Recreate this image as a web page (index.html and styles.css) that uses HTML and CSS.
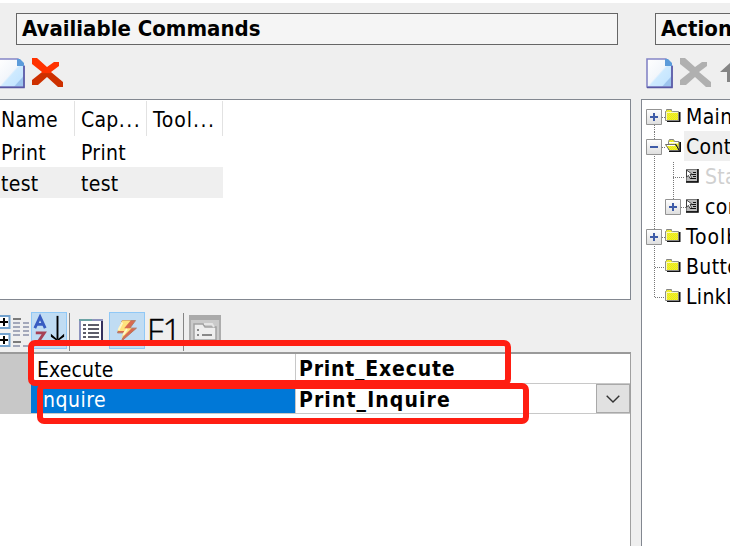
FILE: index.html
```html
<!DOCTYPE html>
<html lang="en">
<head>
<meta charset="utf-8">
<title>Commands</title>
<link rel="stylesheet" href="styles.css">
</head>
<body>
<svg class="defs" aria-hidden="true">
  <defs>
    <linearGradient id="page" x1="0" y1="0" x2="1" y2="1"><stop offset="0" stop-color="#fff"/><stop offset=".49" stop-color="#f2f6fb"/><stop offset=".54" stop-color="#ceeaff"/><stop offset=".78" stop-color="#c6e6ff"/><stop offset=".81" stop-color="#9dc4ee"/></linearGradient>
    <linearGradient id="box" x1="0" y1="0" x2="0" y2="1"><stop offset="0" stop-color="#fff"/><stop offset="1" stop-color="#dedede"/></linearGradient>
    <linearGradient id="redfill" x1="0" y1="0" x2="0" y2="1"><stop offset=".5" stop-color="#ff3200"/><stop offset=".54" stop-color="#cd3000"/></linearGradient>
    <pattern id="dither" width="2" height="2" patternUnits="userSpaceOnUse"><path fill="#ffff12" d="M0 0h2v2H0z"/><path fill="#d9d936" d="M0 0h1v1H0zM1 1h1v1H1z"/></pattern>
    <symbol id="new" viewBox="0 0 27 31"><path fill="url(#page)" stroke="#8585c6" stroke-width="1.600" d="M1 1h19l6 7v21H1z"/><path fill="none" stroke="#5757a4" stroke-width="1.500" d="M1 29.500h25V8"/><path fill="#5b9bda" d="M19 1v7h7V5l-4-4z"/></symbol>
    <symbol id="cross" viewBox="0 0 31 29"><path d="M0 0h5l10 9 7-5h5v4l-8 6 12 10v5h-5l-11-10-9 8H0v-5l10-8L0 6z"/></symbol>
    <symbol id="expand" viewBox="0 0 16 16"><path fill="url(#box)" stroke="#939393" d="M.5.500h15v15H.5z"/><path stroke="#3f5ca8" stroke-width="2" d="M4 8h8M8 4v8"/></symbol>
    <symbol id="collapse" viewBox="0 0 16 16"><path fill="url(#box)" stroke="#939393" d="M.5.500h15v15H.5z"/><path stroke="#3f5ca8" stroke-width="2" d="M4 8h8"/></symbol>
    <symbol id="folder" viewBox="0 0 16 13"><path fill="#111" d="M13.500 3h2v10H2v-1.500h11.500z"/><path fill="url(#dither)" stroke="#858585" d="M.5 11.500v-9l1-1V.5h5v1l1 1h6v9z"/><path fill="none" stroke="#fff" stroke-width=".8" d="M1.400 11V3.400h11.500"/></symbol>
    <symbol id="folder-open" viewBox="0 0 16 13"><path fill="#111" d="M14 3h2v10H4v-1.500h10z"/><path fill="url(#dither)" stroke="#858585" d="M3.500 11V2.500l1-2h4l1 2h4.500v9"/><path fill="#fff" d="M4 3h9v1.500H4z"/><path fill="url(#dither)" stroke="#707070" d="M.5 5.500h10l4 6h-10z"/><path stroke="#fff" d="M2 6.500h8"/><path stroke="#111" d="M10.500 5l4 7"/></symbol>
    <symbol id="action" viewBox="0 0 13 14"><path fill="#bcbcbc" stroke="#777" d="M.5.500h11v12H.5z"/><path fill="none" stroke="#000" stroke-width="1.500" d="M12 0v13H0"/><path stroke="#111" d="M7 3.500h3M6 5.500h4M7 7.500h3M4 9.500h6"/><path fill="#fff" stroke="#222" stroke-width=".8" d="M.5 1v7l2-1.500 1.500 3 1.500-1-1.500-3h2.500z"/></symbol>
  </defs>
</svg>

<div class="window">
  <section class="commands">
    <h2 class="title title-left">Availiable Commands</h2>
    <div class="tools tools-left">
      <svg class="new"><use href="#new"/></svg>
      <svg class="cross red" viewBox="0 0 31 29"><use href="#cross"/></svg>
    </div>
    <div class="list">
      <div class="row head"><span>Name</span><span>Cap<i class="more">...</i></span><span>Tool<i class="more">...</i></span></div>
      <div class="row"><span>Print</span><span>Print</span><span></span></div>
      <div class="row current"><span>test</span><span>test</span><span></span></div>
    </div>
    <div class="propbar">
      <svg class="categories" viewBox="0 0 31 38"><g fill="#fff" stroke="#73a2ce" stroke-width="2"><path d="M-4 4H9.500v12H-4zM-4 22H9.500v12H-4z"/></g><path stroke="#000" stroke-width="2" d="M0 10h8M4 6v8M0 28h8M4 24v8"/><path stroke="#555" stroke-width="1.500" d="M13 7h8M13 30h8"/><path stroke="#8b91a9" stroke-width="1.500" stroke-dasharray="7 3" d="M13 11h16M13 15h16M13 19h16M13 23h16M13 34h16"/></svg>
      <span class="toggle"><svg viewBox="0 0 36 37"><path fill="none" stroke="#385cc2" stroke-width="3" d="M3 16L8.500 4 14 16M5 12h8"/><path fill="none" stroke="#a64156" stroke-width="3" d="M4 21h9L5 33h10"/><path stroke="#000" stroke-width="2" d="M27 3v25"/><path d="M20 22l7 6 7-6v3l-7 5-7-5z"/></svg></span>
      <i class="sep first"></i>
      <svg class="props" viewBox="0 0 24 25"><path fill="#fff" stroke="#8d93bd" stroke-width="2" d="M1 1h22v23H1z"/><path fill="none" stroke="#34305d" stroke-width="2" d="M23 2v22"/><path stroke="#6ca3a5" stroke-width="2" d="M0 1h13"/><path stroke="#29283a" stroke-width="1.600" d="M4 6h3M9 6h11M4 10h3M9 10h11M4 14h3M9 14h11M4 18h3M9 18h11"/></svg>
      <span class="toggle bolt"><svg viewBox="0 0 36 37"><path fill="#d96a50" stroke="#b4765c" d="M13 8h14l-6 8h7L12 30l4-9H8z"/><path fill="#ffe27d" d="M13 8h9l-7 8h8L12 27l3-8H8z"/><path stroke="#fff6cb" stroke-width="2" d="M13 10l-4 8M18 17l-4 6"/></svg></span>
      <span class="fkey">F1</span>
      <i class="sep second"></i>
      <svg class="pages" viewBox="0 0 32 31"><path fill="#cacaca" stroke="#adadad" stroke-width="2" d="M1 1h30v31H1z"/><path fill="#aaa" d="M0 0h32v5H0z"/><path fill="#eee" stroke="#a2a2a2" stroke-width="1.500" d="M5 12V9h9l2 3h11v13H5z"/><path fill="none" stroke="#e5e5e5" stroke-width="2" d="M15 9h8l2 3"/><path stroke="#888" stroke-width="2" d="M8 15h2M8 20h2M13 20h10"/></svg>
    </div>
    <div class="grid">
      <div class="prop"><i class="gutter"></i><span class="name">Execute</span><b class="value">Print_Execute</b></div>
      <div class="prop selected"><i class="gutter"></i><span class="name">Inquire</span><b class="value">Print_Inquire</b><button class="drop" aria-label="Choose"><svg viewBox="0 0 14 8"><path d="M.7.700L7 7 13.300.700"/></svg></button></div>
    </div>
  </section>

  <section class="actions">
    <h2 class="title title-right">Actions</h2>
    <div class="tools tools-right">
      <svg class="new"><use href="#new"/></svg>
      <svg class="cross gray"><use href="#cross"/></svg>
      <svg class="up" viewBox="0 0 22 20"><path d="M11 0l11 10h-7v10H7V10H0z"/></svg>
    </div>
    <div class="tree">
      <div class="node"><svg class="lead" viewBox="0 0 42 30"><path class="dots" d="M12.500 15v15M20 15.500h4"/><use href="#expand" x="4" y="7" width="16" height="16"/><use href="#folder" x="23" y="7" width="16" height="13"/></svg><span>MainMenu</span></div>
      <div class="node"><svg class="lead" viewBox="0 0 42 30"><path class="dots" d="M12.500 0v30M20 15.500h4"/><use href="#collapse" x="4" y="7" width="16" height="16"/><use href="#folder-open" x="23" y="7" width="16" height="13"/></svg><span class="active">ContextMenu</span></div>
      <div class="node child"><svg class="lead" viewBox="0 0 61 30"><path class="dots" d="M12.500 0v30M31.500 0v30M31 15.500h12"/><use href="#action" x="44" y="7" width="13" height="14"/></svg><span class="disabled">Standard</span></div>
      <div class="node child"><svg class="lead" viewBox="0 0 61 30"><path class="dots" d="M12.500 0v30M31.500 0v15M39 15.500h5"/><use href="#expand" x="23" y="7" width="16" height="16"/><use href="#action" x="44" y="7" width="13" height="14"/></svg><span>commands</span></div>
      <div class="node"><svg class="lead" viewBox="0 0 42 30"><path class="dots" d="M12.500 0v30M20 15.500h4"/><use href="#expand" x="4" y="7" width="16" height="16"/><use href="#folder" x="23" y="7" width="16" height="13"/></svg><span class="wide">Toolbar</span></div>
      <div class="node"><svg class="lead" viewBox="0 0 42 30"><path class="dots" d="M12.500 0v30M13 15.500h10"/><use href="#folder" x="23" y="7" width="16" height="13"/></svg><span>Buttons</span></div>
      <div class="node"><svg class="lead" viewBox="0 0 42 30"><path class="dots" d="M12.500 0v15M13 15.500h10"/><use href="#folder" x="23" y="7" width="16" height="13"/></svg><span>LinkLabels</span></div>
    </div>
  </section>
  <div class="mark mark-execute"></div>
  <div class="mark mark-inquire"></div>
</div>
</body>
</html>
```
FILE: styles.css
```css
* { box-sizing: border-box; }
body { margin: 0; font: 21px/30px "DejaVu Sans Condensed", "DejaVu Sans", sans-serif; font-stretch: condensed; color: #000; }
svg { display: block; flex: none; }
.defs { position: absolute; width: 0; height: 0; }
.window { position: relative; display: flex; width: 730px; height: 546px; overflow: hidden; background: #efefef; border-top: 3px solid #fff; }
.commands { width: 641px; flex: none; display: flex; flex-direction: column; }
.actions { flex: 1; min-width: 0; display: flex; flex-direction: column; }
.title { margin: 10px 0 0; height: 32px; flex: none; padding-left: 5px; border: 1px solid #666; background: #f5f5f5; font-size: 22px; line-height: 29px; white-space: nowrap; overflow: hidden; }
.title-left { margin-left: 16px; width: 602px; }
.title-right { margin-left: 14px; width: 140px; }
.tools { height: 54px; flex: none; display: flex; align-items: flex-start; padding-top: 13px; }
.tools-left { margin-left: -2px; gap: 7px; }
.tools-right { padding-left: 5px; gap: 7px; overflow: hidden; }
.new { width: 27px; height: 31px; }
.cross { width: 31px; height: 29px; }
.red { fill: url(#redfill); }
.gray { fill: #b0b0b0; }
.up { width: 22px; height: 20px; margin: 4px 0 0 2px; fill: #858585; }

.list { width: 631px; height: 201px; flex: none; border: solid #828790; border-width: 1px 1px 1px 0; background: #fff; padding-top: 1px; }
.row { width: 223px; height: 31px; display: grid; grid-template-columns: 75px 72px 76px; line-height: 34px; }
.row span { padding-left: 6px; white-space: nowrap; letter-spacing: .3px; }
.row span:first-child { padding-left: 1px; }
.head { height: 35px; line-height: 38px; }
.head span { height: 35px; border-right: 1px solid #e2e2e2; }
.head span:last-child { letter-spacing: .9px; }
.head .more { font-style: normal; letter-spacing: 1.5px; }
.current { background: #efefef; }

.propbar { height: 52px; flex: none; padding-top: 12px; display: flex; align-items: flex-start; }
.categories { width: 31px; height: 38px; }
.toggle { width: 36px; height: 37px; background: #c0dcf3; border: 1px solid #90c8f6; }
.toggle svg { width: 34px; height: 35px; }
.sep { width: 1px; height: 38px; background: #858585; }
.first { margin: 1px 9px 0 2px; }
.second { margin: 1px 5px 0 0; }
.props { width: 24px; height: 25px; margin-top: 7px; }
.bolt { margin-left: 6px; }
.fkey { width: 38px; padding-left: 2px; font: 300 33px/37px "Open Sans", sans-serif; letter-spacing: -1px; -webkit-text-stroke: .4px #000; }
.pages { width: 32px; height: 31px; margin-top: 3px; }

.grid { width: 631px; flex: 1; background: #fff; border-top: 2px solid #9a9a9a; border-right: 1px solid #a0a0a0; }
.prop { height: 30px; display: flex; border-bottom: 1px solid #c8c8c8; }
.gutter { width: 31px; background: #c8c8c8; margin-bottom: -1px; }
.name { width: 265px; padding-left: 6px; border-right: 1px solid #c8c8c8; line-height: 33px; height: 29px; letter-spacing: .15px; }
.value { flex: 1; padding-left: 3px; line-height: 31px; height: 29px; letter-spacing: .8px; }
.selected .name { background: #0078d7; color: #fff; line-height: 32px; letter-spacing: .5px; }
.selected .value { letter-spacing: 1.1px; line-height: 32px; }
.drop { width: 34px; height: 29px; padding: 0; border: 1px solid #a9a9a9; background: #e1e1e1; display: grid; place-items: center; }
.drop svg { width: 14px; height: 8px; fill: none; stroke: #333; stroke-width: 1.4; }

.tree { flex: 1; background: #fff; border: solid #828790; border-width: 1px 0 0 1px; padding-top: 2px; overflow: hidden; }
.node { display: flex; height: 30px; white-space: nowrap; }
.lead { width: 42px; height: 30px; }
.child .lead { width: 61px; }
.node span { padding-left: 2px; line-height: 31px; letter-spacing: .35px; }
.node .wide { letter-spacing: 1px; }
.node .active { background: #efefef; height: 30px; margin-top: -1px; line-height: 33px; }
.node .disabled { color: #d0d0d0; }
.dots { fill: none; stroke: #777; stroke-dasharray: 1 1; }

.mark { position: absolute; border: 6px solid #ff1e12; border-radius: 7px; }
.mark-execute { left: 28px; top: 337px; width: 483px; height: 46px; }
.mark-inquire { left: 37px; top: 380px; width: 492px; height: 41px; }
```
